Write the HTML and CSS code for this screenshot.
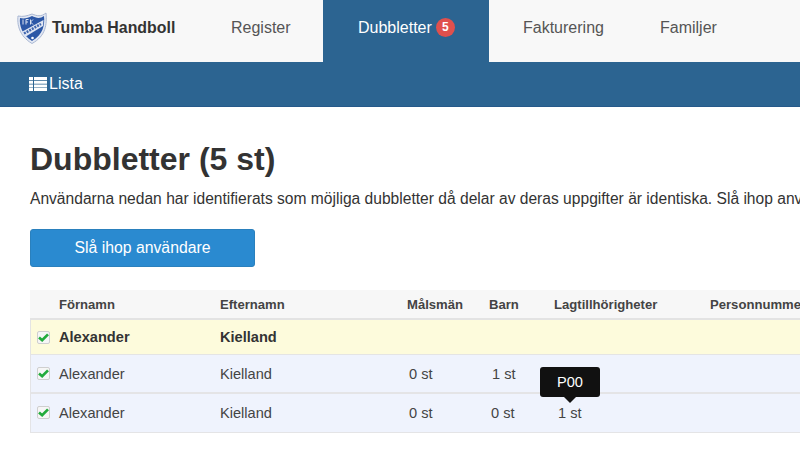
FILE: index.html
```html
<!DOCTYPE html>
<html lang="sv">
<head>
<meta charset="utf-8">
<title>Dubbletter</title>
<link rel="stylesheet" href="styles.css">
</head>
<body>
<header class="topnav">
  <a class="brand">
    <svg class="logo" viewBox="0 0 30 32" width="30" height="32" aria-hidden="true">
      <path d="M1 4 C6 5 10 4 15 2 C20 4 24 5 29 1 C30 12 29 24 15 31.500 C2 24 0 12 1 4Z" fill="#e3e8f3" stroke="#a9b7d3" stroke-width="1"/>
      <path d="M3 6 C7 7 11 6 15 4 C19 6 23 7 27 4 C28 13 26 23 15 29 C5 23 2 13 3 6Z" fill="#2c57a6"/>
      <path d="M4.500 20 L26.500 8 L26 14 L8 25Z" fill="#dfe5f2"/>
      <path d="M7 21.500 L24 12" stroke="#3f65ad" stroke-width="2.500" stroke-dasharray="2 1" fill="none"/>
      <circle cx="15.500" cy="26" r="1.300" fill="#fff"/>
      <path d="M6 7.500v5M9 7.500v5M9 7.500h2.500M9 10h2M13.500 7.500v5M13.500 10l2.500-2.500M13.500 10l2.500 2.500" stroke="#dbe2f0" stroke-width="1" fill="none"/>
    </svg>
    <span>Tumba Handboll</span>
  </a>
  <nav class="tabs">
    <a class="tab tab-register">Register</a>
    <a class="tab tab-active">Dubbletter<span class="badge">5</span></a>
    <a class="tab tab-invoice">Fakturering</a>
    <a class="tab">Familjer</a>
  </nav>
</header>
<div class="subnav">
  <a class="sublink">
    <svg class="list-icon" viewBox="0 0 18 14" width="18" height="14" aria-hidden="true">
      <path fill="#fff" d="M0 0h4v3H0zM5 0h13v3H5zM0 3.700h4v3H0zM5 3.700h13v3H5zM0 7.400h4v3H0zM5 7.400h13v3H5zM0 11h4v3H0zM5 11h13v3H5z"/>
    </svg>
    Lista
  </a>
</div>
<main class="content">
  <h1>Dubbletter (5 st)</h1>
  <p class="lead">Användarna nedan har identifierats som möjliga dubbletter då delar av deras uppgifter är identiska. Slå ihop användarna om de är samma person.</p>
  <button class="merge">Slå ihop användare</button>
  <div class="table">
    <div class="row head">
      <span></span><span>Förnamn</span><span>Efternamn</span><span>Målsmän</span><span>Barn</span><span>Lagtillhörigheter</span><span>Personnummer</span>
    </div>
    <div class="row primary">
      <span class="check check-primary"><svg viewBox="0 0 12 10" width="11" height="9"><path d="M1 5 L4.500 8 L11 1.500" fill="none" stroke="#22ab3c" stroke-width="3"/></svg></span>
      <span>Alexander</span><span>Kielland</span><span></span><span></span><span></span><span></span>
    </div>
    <div class="row dup">
      <span class="check"><svg viewBox="0 0 12 10" width="11" height="9"><path d="M1 5 L4.500 8 L11 1.500" fill="none" stroke="#22ab3c" stroke-width="3"/></svg></span>
      <span>Alexander</span><span>Kielland</span><span class="v-parent">0 st</span><span class="v-child-1">1 st</span><span></span><span></span>
    </div>
    <div class="row dup last">
      <span class="check"><svg viewBox="0 0 12 10" width="11" height="9"><path d="M1 5 L4.500 8 L11 1.500" fill="none" stroke="#22ab3c" stroke-width="3"/></svg></span>
      <span>Alexander</span><span>Kielland</span><span class="v-parent">0 st</span><span class="v-child-0">0 st</span>
      <span class="v-team">1 st<span class="tooltip">P00</span></span><span></span>
    </div>
  </div>
</main>
</body>
</html>
```
FILE: styles.css
```css
* { box-sizing: border-box; }
html, body { margin: 0; width: 800px; height: 450px; overflow: hidden; }
body { font-family: "Liberation Sans", Arial, sans-serif; color: #333; background: #fff; }
.topnav { display: flex; height: 62px; background: #f8f8f8; }
.brand { display: flex; align-items: center; gap: 5px; width: 231px; padding: 0 0 6px 17px; font-size: 15.900px; font-weight: 700; color: #333; }
.logo { flex: none; }
.tabs { display: flex; font-size: 16px; color: #555; }
.tab { display: flex; align-items: center; padding-bottom: 7px; }
.tab-register { width: 92px; }
.tab-active { width: 166px; padding-left: 35px; background: #2c6491; color: #fff; }
.tab-invoice { width: 171px; padding-left: 34px; }
.badge { display: inline-block; width: 19px; height: 19px; margin-left: 4px; border-radius: 50%; background: #e0504d; color: #fff; font-size: 12px; font-weight: 700; line-height: 19px; text-align: center; }
.subnav { display: flex; align-items: center; height: 45px; padding: 0 0 0 29px; background: #2c6491; border-bottom: 1px solid #26598a; color: #fff; font-size: 16px; }
.sublink { display: flex; align-items: center; gap: 2px; }
.content { padding: 0 0 0 30px; }
h1 { margin: 32px 0 0; font-size: 32px; line-height: 40px; font-weight: 700; color: #333; }
.lead { margin: 9px 0 0; font-size: 15.600px; line-height: 22px; white-space: nowrap; color: #333; }
.merge { display: block; width: 225px; height: 38px; margin: 19px 0 0; padding: 0; border: 1px solid #2a80bd; border-radius: 3px; background: #2a8ad0; color: #fff; font: 15.800px "Liberation Sans", Arial, sans-serif; }
.table { width: 800px; margin-top: 23px; font-size: 14.600px; }
.row { display: grid; grid-template-columns: 29px 161px 187px 82px 65px 156px 120px; align-items: center; }
.head { height: 30px; background: #f7f7f7; border-bottom: 2px solid #e3e3e3; font-size: 13.100px; font-weight: 700; color: #444; }
.primary { height: 35px; background: #fdfbdc; border-bottom: 1px solid #e4e4e4; border-left: 1px solid #e4e4e4; font-weight: 700; }
.dup { height: 39px; background: #eff3fd; border-bottom: 2px solid #e4e4e6; border-left: 1px solid #e4e4e6; color: #444; }
.primary > span:not(.check), .dup > span:not(.check) { margin-left: -1px; }
.last { height: 39px; padding-bottom: 1px; border-bottom-width: 1px; }
.check { display: flex; align-items: center; justify-content: center; width: 13px; height: 13px; margin-left: 6px; border: 1px solid #cfcfcf; border-radius: 2px; background: #f6f6f6; }
.v-parent { padding-left: 2px; }
.v-child-1 { padding-left: 3px; }
.v-child-0 { padding-left: 2px; }
.v-team { position: relative; justify-self: start; padding-left: 4px; }
.tooltip { position: absolute; left: -14px; bottom: 24px; width: 60px; height: 30px; border-radius: 3px; background: #111; color: #fff; font-size: 14.600px; line-height: 30px; text-align: center; }
.tooltip::after { content: ""; position: absolute; left: 24px; top: 30px; border: 6px solid transparent; border-top-color: #111; border-bottom-width: 0; }
```
